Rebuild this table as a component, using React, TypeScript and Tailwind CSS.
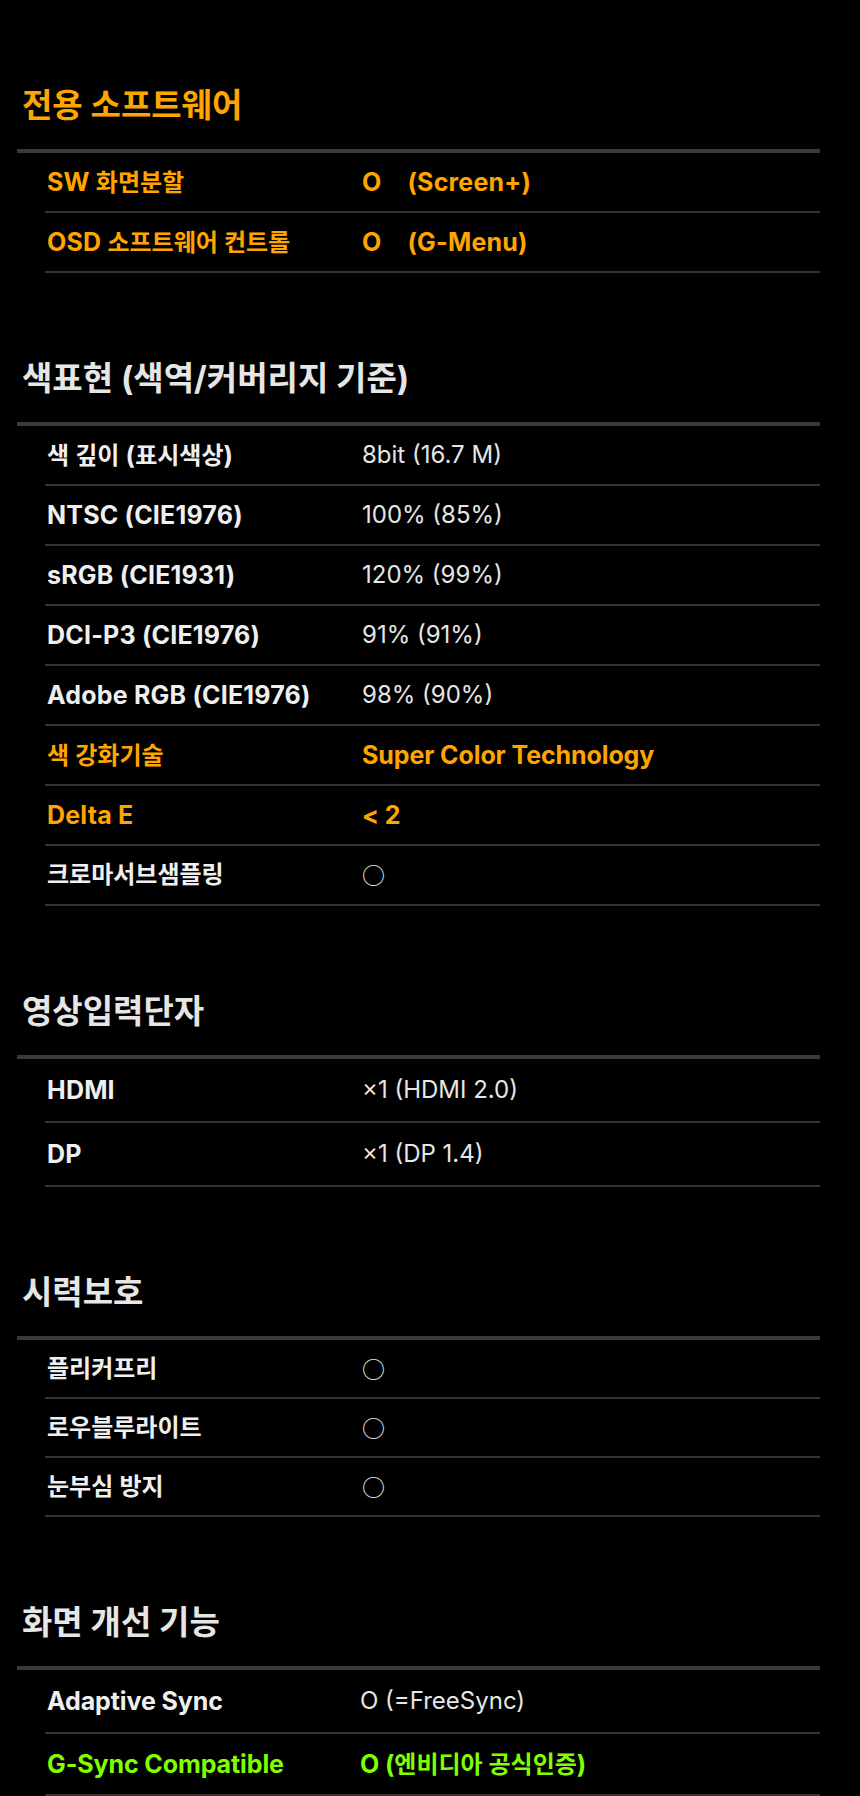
import React from "react";

type Tone = "white" | "orange" | "green";

type Row = {
  label: string;
  value: React.ReactNode;
  tone?: Tone;
  h?: string;
};

const toneLabel: Record<Tone, string> = {
  white: "text-[#efefef] font-bold",
  orange: "text-[#ffa500] font-bold",
  green: "text-[#7fff00] font-bold",
};

const toneValue: Record<Tone, string> = {
  white: "text-[#e6e6e6] font-normal",
  orange: "text-[#ffa500] font-bold",
  green: "text-[#7fff00] font-bold",
};

const HANGUL = /([\u1100-\u11FF\u3130-\u318F\uAC00-\uD7AF]+)/;

function Mixed({ text, tight }: { text: string; tight?: boolean }) {
  const parts = text.split(HANGUL).filter((p) => p.length > 0);
  return (
    <>
      {parts.map((p, i) =>
        HANGUL.test(p) ? (
          <span key={i}>{p}</span>
        ) : (
          <span
            key={i}
            className={tight ? "text-[25px] tracking-[-0.1px]" : "text-[25px] tracking-[0.2px]"}
          >
            {p}
          </span>
        )
      )}
    </>
  );
}

function Ring() {
  return <span className="font-['Noto_Sans_CJK_KR'] font-normal text-[23px]">○</span>;
}

function Section({
  title,
  titleTone = "white",
  rows,
  cols = "grid-cols-[317px_1fr]",
  tight = false,
}: {
  title: string;
  titleTone?: Tone;
  rows: Row[];
  cols?: string;
  tight?: boolean;
}) {
  return (
    <section className="pt-[85px]">
      <h2
        className={
          "ml-[5px] h-[40px] text-[33px] leading-[40px] mb-[24px] " +
          (titleTone === "orange"
            ? "text-[#ffa500] font-bold"
            : "text-[#e6e6e6] font-bold")
        }
      >
        {title}
      </h2>
      <div className="h-[4px] bg-[#3a3a3a]" />
      <div className="ml-[28px]">
        {rows.map((r, i) => {
          const t = r.tone ?? "white";
          return (
            <div
              key={i}
              className={
                "grid items-center border-b-2 border-[#333333] " +
                cols +
                " " +
                (r.h ?? "h-[60px]")
              }
            >
              <div className={"pl-[2px] text-[24px] leading-[30px] " + toneLabel[t]}>
                <Mixed text={r.label} tight={tight} />
              </div>
              <div className={"text-[24px] leading-[30px] " + toneValue[t]}>
                {typeof r.value === "string" && t !== "white" ? (
                  <Mixed text={r.value} tight />
                ) : (
                  r.value
                )}
              </div>
            </div>
          );
        })}
      </div>
    </section>
  );
}

export default function App() {
  return (
    <div className="min-h-[1796px] w-[860px] bg-black pl-[17px] pr-[40px] font-['Inter','Noto_Sans_CJK_KR',sans-serif]">
      <Section
        title="전용 소프트웨어"
        titleTone="orange"
        rows={[
          {
            label: "SW 화면분할",
            tone: "orange",
            value: (
              <span className="text-[25px] tracking-[0.2px]">
                O<span className="ml-[26px]">(Screen+)</span>
              </span>
            ),
          },
          {
            label: "OSD 소프트웨어 컨트롤",
            tone: "orange",
            value: (
              <span className="text-[25px] tracking-[0.2px]">
                O<span className="ml-[26px]">(G-Menu)</span>
              </span>
            ),
          },
        ]}
      />
      <Section
        title="색표현 (색역/커버리지 기준)"
        rows={[
          { label: "색 깊이 (표시색상)", value: "8bit (16.7 M)" },
          { label: "NTSC (CIE1976)", value: "100% (85%)" },
          { label: "sRGB (CIE1931)", value: "120% (99%)" },
          { label: "DCI-P3 (CIE1976)", value: "91% (91%)" },
          { label: "Adobe RGB (CIE1976)", value: "98% (90%)" },
          { label: "색 강화기술", value: "Super Color Technology", tone: "orange" },
          { label: "Delta E", value: "< 2", tone: "orange" },
          { label: "크로마서브샘플링", value: <Ring /> },
        ]}
      />
      <Section
        title="영상입력단자"
        rows={[
          { label: "HDMI", value: "×1 (HDMI 2.0)", h: "h-[64px]" },
          { label: "DP", value: "×1 (DP 1.4)", h: "h-[64px]" },
        ]}
      />
      <Section
        title="시력보호"
        rows={[
          { label: "플리커프리", value: <Ring />, h: "h-[59px]" },
          { label: "로우블루라이트", value: <Ring />, h: "h-[59px]" },
          { label: "눈부심 방지", value: <Ring />, h: "h-[59px]" },
        ]}
      />
      <Section
        title="화면 개선 기능"
        cols="grid-cols-[315px_1fr]"
        tight
        rows={[
          { label: "Adaptive Sync", value: "O (=FreeSync)", h: "h-[64px]" },
          {
            label: "G-Sync Compatible",
            value: "O (엔비디아 공식인증)",
            tone: "green",
            h: "h-[62px]",
          },
        ]}
      />
    </div>
  );
}
